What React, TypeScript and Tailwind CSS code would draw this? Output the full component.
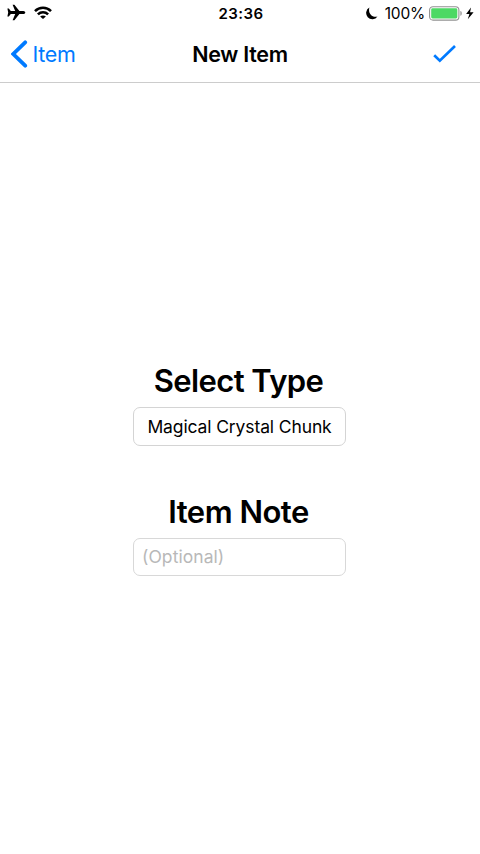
import React from "react";

function StatusBar() {
  return (
    <div className="grid h-[27px] grid-cols-3 items-center text-black">
      <div className="flex items-center pb-[2px] pl-[7px]">
        <svg width="19" height="17" viewBox="0 0 19 17" className="shrink-0">
          <path
            d="M.4 4.6h1.4l2 2.5h4.4L5.6.8h1.8l5 6.1h4c1 0 1.9.8 1.9 1.6s-.9 1.6-1.9 1.6h-4l-5 6.1H5.6l2.6-6.3H3.8l-2 2.5H.4l.8-3.9z"
            fill="#000"
          />
        </svg>
        <svg width="18" height="13" viewBox="0 0 18 13" className="ml-2 shrink-0">
          <g fill="none" stroke="#000" strokeWidth="2.6">
            <path d="M1 5.1C5.5.7 12.5.7 17 5.1" />
            <path d="M3.9 8.4c2.9-2.8 7.3-2.8 10.2 0" />
          </g>
          <path d="M6.1 10.6c1.6-1.4 4.2-1.4 5.8 0L9 13z" fill="#000" />
        </svg>
      </div>
      <div className="pl-[2px] text-center text-[15px] leading-[27px] font-semibold tracking-[0.4px]">23:36</div>
      <div className="flex items-center justify-end pr-[6px]">
        <svg width="13" height="13" viewBox="0 0 13 13" className="mr-[7px] shrink-0">
          <path d="M4.4.5A6.2 6.2 0 1 0 12.5 9.4C7.2 11.2 2.7 6 4.4.5z" fill="#000" />
        </svg>
        <span className="mr-1 text-[15.5px] leading-[27px] tracking-[-0.2px]">100%</span>
        <svg width="45" height="15" viewBox="0 0 45 15" className="shrink-0">
          <rect x=".6" y=".7" width="29.3" height="13.4" rx="3.4" fill="#fff" stroke="#919191" strokeWidth="1.1" />
          <rect x="2.2" y="2.3" width="26.1" height="10.2" rx="1.4" fill="#4cd964" />
          <path d="M31.4 5c1.8.4 1.8 4.4 0 4.8z" fill="#919191" />
          <path d="M42 1.5L37.1 8h3.3l-1.6 5.3 5.8-7.1h-3.5z" fill="#000" />
        </svg>
      </div>
    </div>
  );
}

function NavBar() {
  return (
    <div className="grid h-[55px] grid-cols-3 items-center text-[21.5px] leading-[55px]">
      <button className="flex items-center pl-[11px] tracking-[-0.3px] text-[#007aff]">
        <svg width="17" height="28" viewBox="0 0 17 28" className="mr-[4px] mb-[2px] shrink-0">
          <path d="M14.2 2.3L2.3 14l11.9 11.7" fill="none" stroke="#007aff" strokeWidth="3.8" strokeLinecap="round" />
        </svg>
        <span className="pl-[0.5px]">Item</span>
      </button>
      <h1 className="text-center font-semibold tracking-[-0.3px]">New Item</h1>
      <button className="flex justify-end pr-[23px] pb-[2px]" aria-label="Save">
        <svg width="24" height="20" viewBox="0 0 24 20">
          <path d="M1.2 11.2l5.6 5.4L22 2" fill="none" stroke="#007aff" strokeWidth="2.7" />
        </svg>
      </button>
    </div>
  );
}

export default function App() {
  return (
    <div className="flex h-[854px] w-[480px] flex-col bg-white font-[Inter,'Liberation_Sans',sans-serif] text-black">
      <header className="h-[83px] shrink-0 border-b border-[#cccccc]">
        <StatusBar />
        <NavBar />
      </header>
      <main className="flex flex-col items-center pt-[278px] pr-px">
        <h2 className="h-[46px] pr-[2px] text-[31px] leading-[40px] font-semibold tracking-[-0.6px] whitespace-nowrap">
          Select Type
        </h2>
        <button className="h-[39px] w-[213px] rounded-[7px] border border-[#d4d4d4] text-[17.5px] leading-[37px] tracking-[-0.12px] whitespace-nowrap">
          Magical Crystal Chunk
        </button>
        <h2 className="mt-[46px] h-[46px] pr-[2px] text-[31px] leading-[40px] font-semibold tracking-[-0.5px] whitespace-nowrap">
          Item Note
        </h2>
        <input
          className="h-[38px] w-[213px] rounded-[7px] border border-[#d8d8d8] px-[8px] pb-[2px] text-[17.5px] tracking-[0.05px] outline-none placeholder:text-[#b8b8b8]"
          placeholder="(Optional)"
        />
      </main>
    </div>
  );
}
